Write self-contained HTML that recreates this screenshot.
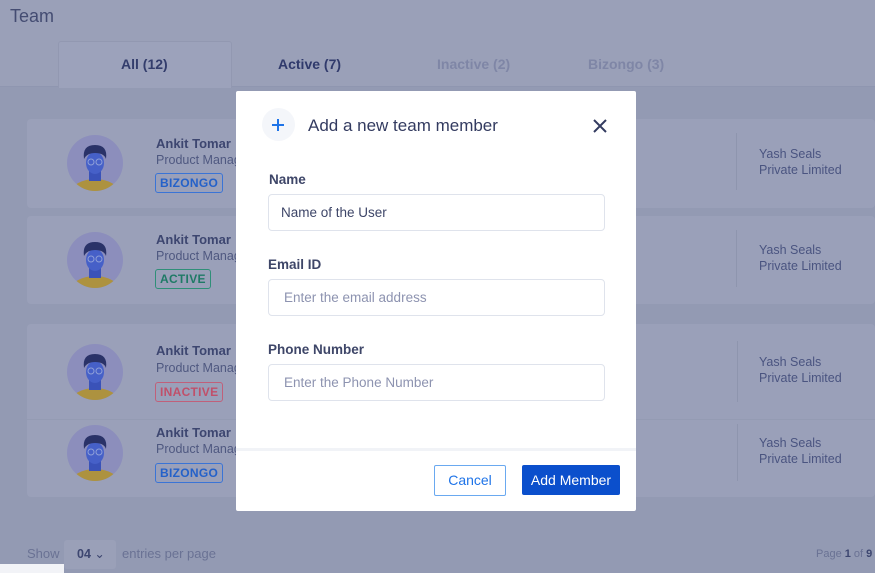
<!DOCTYPE html>
<html><head><style>
*{box-sizing:border-box;margin:0;padding:0}
body{width:875px;height:573px;overflow:hidden;background:#939ab3;font-family:"Liberation Sans",sans-serif;position:relative}
.abs{position:absolute}
.hdr{left:0;top:0;width:875px;height:87px;background:#9aa0b8;border-bottom:1px solid #8f96b0}
.tab{top:64px;font-size:14px;font-weight:bold;transform:translateY(-50%)}
.card{left:27px;width:848px;background:#9aa0b9;border-radius:4px}
.nm{font-size:13px;font-weight:bold;color:#3d4670}
.role{font-size:12.5px;color:#4f5880}
.badge{font-size:12px;font-weight:bold;padding:2px 4px;border:1px solid;border-radius:3px;letter-spacing:.3px;line-height:14px}
.co{font-size:12.5px;color:#4a5480;line-height:16px}
.vl{width:1px;background:#8e95ae}
.modal{left:236px;top:91px;width:400px;height:420px;background:#fff;border-radius:2px}
.lbl{font-size:13.5px;font-weight:bold;color:#3e4668}
.inp{left:32px;width:337px;height:37px;border:1px solid #dfe3ec;border-radius:4px;font-size:13.5px;line-height:35px;padding-left:12px;color:#8d93b0}
</style></head><body>
<div class="abs hdr"></div>
<div class="abs" style="left:58px;top:41px;width:174px;height:47px;background:#9ca2bb;border:1px solid #9298b1;border-bottom:none;border-radius:3px 3px 0 0"></div>
<div class="abs" style="left:10px;top:6px;font-size:18px;color:#444c72">Team</div>
<div class="abs tab" style="left:121px;color:#333d6c">All (12)</div>
<div class="abs tab" style="left:278px;color:#303a6c">Active (7)</div>
<div class="abs tab" style="left:437px;color:#7f86a6">Inactive (2)</div>
<div class="abs tab" style="left:588px;color:#7f86a6">Bizongo (3)</div>

<div class="abs card" style="top:119px;height:89px"></div>
<div class="abs card" style="top:216px;height:88px"></div>
<div class="abs card" style="top:324px;height:173px"></div>
<div class="abs" style="left:27px;top:419px;width:848px;height:1px;background:#949bb3"></div>

<svg class="abs" style="left:0;top:0" width="875" height="573">
<defs><g id="av">
<circle cx="0" cy="0" r="28" fill="#8c8ebc"/>
<clipPath id="c"><circle cx="0" cy="0" r="28"/></clipPath>
<g clip-path="url(#c)">
<ellipse cx="0" cy="30" rx="24" ry="14" fill="#ad923f"/>
<rect x="-6" y="6" width="12" height="12" fill="#3a52b8"/>
<ellipse cx="0" cy="0" rx="9" ry="11" fill="#4660c8"/>
<path d="M-11 -4 Q-13 -18 0 -18 Q13 -18 11 -4 Q9 -10 0 -10 Q-8 -10 -11 -4Z" fill="#2a3268"/>
<circle cx="-4" cy="-1" r="3" fill="none" stroke="#8f9fd8" stroke-width="1"/>
<circle cx="4" cy="-1" r="3" fill="none" stroke="#8f9fd8" stroke-width="1"/>
</g></g></defs>
<use href="#av" x="95" y="163"/>
<use href="#av" x="95" y="260"/>
<use href="#av" x="95" y="372"/>
<use href="#av" x="95" y="453"/>
</svg>

<div class="abs nm" style="left:156px;top:136px">Ankit Tomar</div>
<div class="abs role" style="left:156px;top:153px">Product Manager</div>
<div class="abs badge" style="left:155px;top:173px;color:#2461c9;border-color:#3a74d6">BIZONGO</div>
<div class="abs nm" style="left:156px;top:232px">Ankit Tomar</div>
<div class="abs role" style="left:156px;top:249px">Product Manager</div>
<div class="abs badge" style="left:155px;top:269px;color:#1f7a66;border-color:#2f8f78">ACTIVE</div>
<div class="abs nm" style="left:156px;top:343px">Ankit Tomar</div>
<div class="abs role" style="left:156px;top:361px">Product Manager</div>
<div class="abs badge" style="left:155px;top:382px;color:#c0506a;border-color:#c0607a">INACTIVE</div>
<div class="abs nm" style="left:156px;top:425px">Ankit Tomar</div>
<div class="abs role" style="left:156px;top:442px">Product Manager</div>
<div class="abs badge" style="left:155px;top:463px;color:#2461c9;border-color:#3a74d6">BIZONGO</div>

<div class="abs vl" style="left:736px;top:133px;height:57px"></div>
<div class="abs vl" style="left:736px;top:230px;height:57px"></div>
<div class="abs vl" style="left:737px;top:341px;height:61px"></div>
<div class="abs vl" style="left:737px;top:424px;height:57px"></div>
<div class="abs co" style="left:759px;top:146px">Yash Seals<br>Private Limited</div>
<div class="abs co" style="left:759px;top:242px">Yash Seals<br>Private Limited</div>
<div class="abs co" style="left:759px;top:354px">Yash Seals<br>Private Limited</div>
<div class="abs co" style="left:759px;top:435px">Yash Seals<br>Private Limited</div>

<div class="abs" style="left:27px;top:546px;font-size:13px;color:#6a7294">Show</div>
<div class="abs" style="left:64px;top:540px;width:52px;height:29px;background:#9aa0b8;border-radius:3px;font-size:12.5px;font-weight:bold;color:#3d4670;padding:6px 0 0 13px">04 <span style="font-weight:normal">⌄</span></div>
<div class="abs" style="left:122px;top:546px;font-size:13px;color:#6a7294">entries per page</div>
<div class="abs" style="left:816px;top:548px;font-size:11px;color:#6a7294">Page <b style="color:#3d4670">1</b> of <b style="color:#3d4670">9</b></div>
<div class="abs" style="left:0;top:564px;width:64px;height:9px;background:#f2f3f7"></div>

<div class="abs modal">
<div class="abs" style="left:26px;top:17px;width:33px;height:33px;border-radius:50%;background:#f4f6fa"></div>
<div class="abs" style="left:36px;top:33px;width:12px;height:2px;background:#1f74e8"></div>
<div class="abs" style="left:41px;top:28px;width:2px;height:12px;background:#1f74e8"></div>
<div class="abs" style="left:72px;top:25px;font-size:17px;color:#333b60">Add a new team member</div>
<svg class="abs" style="left:357px;top:28px" width="14" height="14"><path d="M1 1L13 13M13 1L1 13" stroke="#333b60" stroke-width="2"/></svg>
<div class="abs lbl" style="left:33px;top:81px">Name</div>
<div class="abs inp" style="top:103px;color:#3e4668">Name of the User</div>
<div class="abs lbl" style="left:32px;top:166px">Email ID</div>
<div class="abs inp" style="top:188px;padding-left:15px">Enter the email address</div>
<div class="abs lbl" style="left:32px;top:251px">Phone Number</div>
<div class="abs inp" style="top:273px;padding-left:15px">Enter the Phone Number</div>
<div class="abs" style="left:0;top:357px;width:400px;height:3px;background:#f1f3f7"></div>
<div class="abs" style="left:198px;top:374px;width:72px;height:31px;border:1px solid #6aa9f0;border-radius:2px;color:#1f74e8;font-size:14px;text-align:center;line-height:29px">Cancel</div>
<div class="abs" style="left:286px;top:374px;width:98px;height:30px;background:#0b4fcc;border-radius:2px;color:#fff;font-size:14px;text-align:center;line-height:30px">Add Member</div>
</div>
</body></html>
